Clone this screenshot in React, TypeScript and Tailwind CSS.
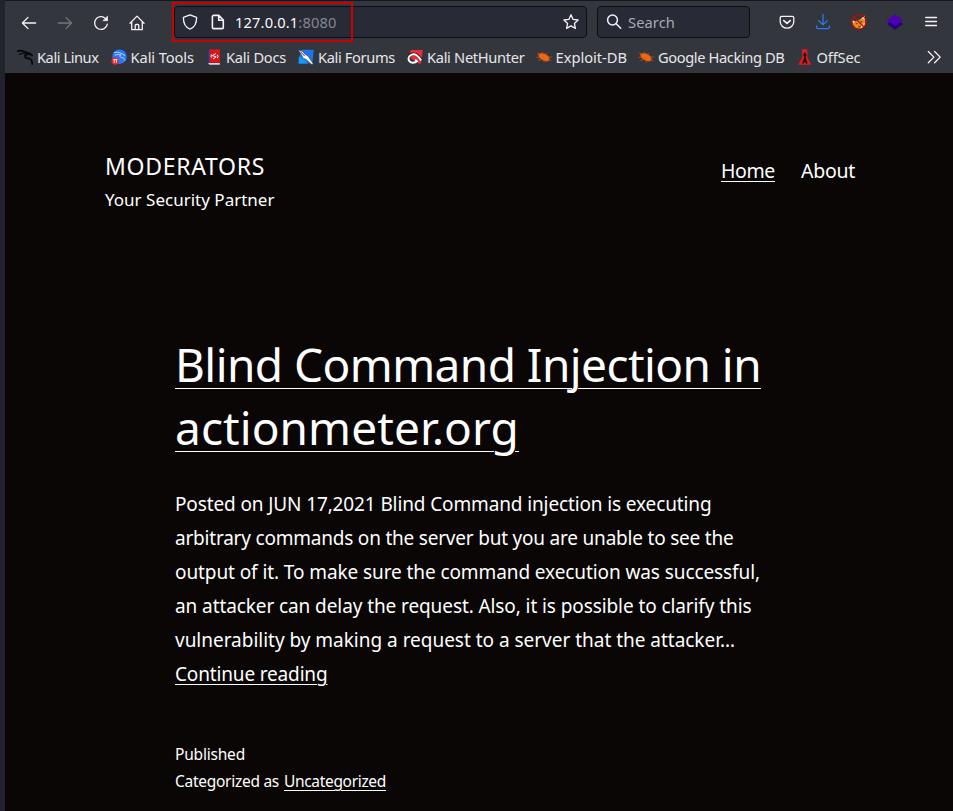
import { useLayoutEffect, useRef, useState } from 'react';
import type { ReactNode } from 'react';

/* Text run whose tracking is computed so that it fills the given width. */
function Fit({ w, children, className = '' }: { w: number; children: ReactNode; className?: string }) {
  const ref = useRef<HTMLSpanElement>(null);
  const [spacing, setSpacing] = useState(0);
  useLayoutEffect(() => {
    const el = ref.current;
    if (!el) return;
    const natural = el.getBoundingClientRect().width;
    const n = (el.textContent ?? '').length;
    setSpacing((w - natural) / n);
  }, [w]);
  return (
    <span ref={ref} className={`inline-block whitespace-nowrap ${className}`} style={{ letterSpacing: `${spacing}px` }}>
      {children}
    </span>
  );
}

const line = { fill: 'none', stroke: '#f4f4f6', strokeWidth: 1.3, strokeLinecap: 'round', strokeLinejoin: 'round' } as const;

const Dragon = ({ color }: { color: string }) => (
  <g fill="none" stroke={color} strokeLinecap="round" strokeLinejoin="round">
    <path d="M.8 2 5 1.7 9.4 3.6" strokeWidth="1.8" />
    <path d="M2.6 5.4 6.5 4 10 5" strokeWidth="1.3" />
    <path d="M9.2 3.6 13 4.6 15 6.6M13 5 10.5 5.2C8 5.4 7.4 7.4 8.6 8.5 10 9.6 12.6 8.9 14 10.6 15 11.8 15 13.2 15.3 15" strokeWidth="1.9" />
  </g>
);

const Bug = () => (
  <g fill="#f26511" stroke="#c9540f" strokeWidth=".4">
    <path d="M2.4 5.2 5 4.3l3.6.4 3.4 2.1 1.6 2.6-1.4 2.8-3.2-.2-4.4-2.3L3 8Z" />
    <path d="M1 3.8 4 5.4M.6 8.4l3 .2M2.4 11.4l3-1M12 8.2l3.8-.2M12.5 10.4l2.6 1.6M5.4 4.6 7 3M9.6 5.4l1.4-1.2M7 11l1.6 2.4" fill="none" strokeWidth=".8" />
  </g>
);

const bookmarks: { label: string; w: number; gap: string; icon: ReactNode }[] = [
  { label: 'Kali Linux', w: 61.5, gap: 'mr-[12px]', icon: <Dragon color="#08090b" /> },
  {
    label: 'Kali Tools', w: 63.5, gap: 'mr-[12px]',
    icon: (
      <g>
        <circle cx="8.5" cy="7.7" r="7.2" fill="#2777ff" />
        <path d="M3 3.8C6 2.6 8.5 3.5 10.5 4.5L14 6.6M3.8 6.5C6.5 4.8 8.4 5.4 9.8 6.2M10 5.3C7.6 7 9 8.3 11 8.5c1.8.4 2.6 1.6 2.8 3" fill="none" stroke="#c9dfff" strokeWidth=".9" />
        <circle cx="4.2" cy="12" r="3.7" fill="#ed2530" />
        <path d="M2.2 10.6h4.3M3.3 10.6v3.2M5.4 10.6v3.2" stroke="#fff" strokeWidth=".9" />
      </g>
    ),
  },
  {
    label: 'Kali Docs', w: 60, gap: 'mr-[12px]',
    icon: (
      <g>
        <path d="M1.8 1 3.8.3v15L1.8 14.6Z" fill="#183f9a" />
        <path d="M3.5.3H14v13.4H3.5Z" fill="#dd1519" />
        <path d="M2.2 14h11.6v1.7H3.2Z" fill="#d8d3d3" />
        <path d="M9.8 4.6 6.4 6.6l3.8 1.2L7 10M5.6 5.4 4.9 7.2l1 1.4M11.2 5.8l.9 1.5-.8 1.8" fill="none" stroke="#fff" strokeWidth="1" />
      </g>
    ),
  },
  {
    label: 'Kali Forums', w: 77, gap: 'mr-[12px]',
    icon: (
      <g>
        <path d="M2.8.8H15.8L14.4 14.5H.6Z" fill="#1e74ee" />
        <path d="M.8 7.5 6 10l3 4.5H.6Z" fill="#1499f5" />
        <path d="M0 .8 4.7 2.4l2 2.6L10 7l5.4 8-1.6.4L8 10.4 5 9.2 3.6 6Z" fill="#fff" stroke="#29303b" strokeWidth=".6" />
        <path d="m2.4 2.6 4.4 4.6" stroke="#303745" strokeWidth="1" />
      </g>
    ),
  },
  {
    label: 'Kali NetHunter', w: 97.5, gap: 'mr-[11px]',
    icon: (
      <g>
        <path d="M3.6 1H15.7L14.2 14.5H.8Z" fill="#ee2a39" />
        <path d="M1.4 8.4C2.2 5.4 6.4 4 9.4 5.8c2.2 1.4 4 3.6 5.7 5.8" fill="none" stroke="#202329" strokeWidth="3" />
        <path d="M0 8h3l3 3h5v4H0Z" fill="#34363e" />
        <path d="M1.6 8.6C2.5 5.6 6.7 4.5 9.2 6c2 1.4 3.6 3.4 5 5.6M1.6 8.6c-.6 3 1.4 5.2 4.6 5.1 1.6 0 2.8-.5 3.8-1.4L8.2 10.6" fill="none" stroke="#fff" strokeWidth="1.9" />
      </g>
    ),
  },
  { label: 'Exploit-DB', w: 71.5, gap: 'mr-[11px]', icon: <Bug /> },
  { label: 'Google Hacking DB', w: 126.5, gap: 'mr-[12px]', icon: <Bug /> },
  {
    label: 'OffSec', w: 44, gap: 'mr-0',
    icon: (
      <g>
        <path d="M5.1.2h5.2l.1 8.2 4 7.3H1.2l4-7.3Z" fill="#df1b21" />
        <path d="M7 3.4h1.7v2h1v1.4H9V10l1.8 4.4H8.6l-.8-2.2-1 2.2H4.9L6.9 9.8V6.8H6V5.4h1Z" fill="#35090c" />
      </g>
    ),
  },
];

const paragraph: [string, number][] = [
  ['Posted on JUN 17,2021 Blind Command injection is executing', 536.5],
  ['arbitrary commands on the server but you are unable to see the', 558.5],
  ['output of it. To make sure the command execution was successful,', 585],
  ['an attacker can delay the request. Also, it is possible to clarify this', 576.5],
  ['vulnerability by making a request to a server that the attacker…', 560],
];

function Toolbar() {
  return (
    <nav className="flex h-[42px] shrink-0 items-center">
      <div className="flex w-[169px] items-center gap-[20px] pt-px pl-4">
        <svg className="size-4" viewBox="0 0 16 16" {...line}><path d="M14.7 8H1.6M7 2.4 1.4 8 7 13.6" /></svg>
        <svg className="size-4" viewBox="0 0 16 16" {...line} stroke="#75767c"><path d="M1.3 8h13.1M9 2.4 14.6 8 9 13.6" /></svg>
        <svg className="size-4" viewBox="0 0 16 16" {...line}><path d="M14.3 9.1A6.4 6.4 0 1 1 12.4 3.4L14 5" /><path d="M14.5 1.5v4.2h-4.3Z" fill="#f4f4f6" strokeWidth=".7" /></svg>
        <svg className="size-4" viewBox="0 0 16 16" {...line}><path d="M1 8.2 8 1.1l7 7.1M2.7 6.8v7.8h10.6V6.8M6.2 14.4v-3.9a1 1 0 0 1 1-1h1.6a1 1 0 0 1 1 1v3.9" /></svg>
      </div>
      <div className="relative flex h-8 w-[413px] items-center rounded-[4px] border border-[#0d0e13] bg-[#282a36] pl-[7px]">
        <svg className="size-4" viewBox="0 0 16 16" {...line}><path d="M8 .9 14.6 3.3C14.7 9 12.5 13.5 8 15.1 3.5 13.5 1.3 9 1.4 3.3Z" /></svg>
        <svg className="ml-[12px] size-4" viewBox="0 0 16 16" {...line} strokeWidth="1.6"><path d="M2.4 2.6a1.2 1.2 0 0 1 1.2-1.2h5.2l4.5 4.6v7.4a1.2 1.2 0 0 1-1.2 1.2H3.6a1.2 1.2 0 0 1-1.2-1.2ZM8.7 1.6v4.6h4.5" /></svg>
        <span className="ml-[9px] text-[14.67px] leading-5 text-[#85868f]"><Fit w={101.5}><span className="text-[#f8f8f9]">127.0.0.1</span>:8080</Fit></span>
        <svg className="mr-[7px] ml-auto size-4" viewBox="0 0 16 16" {...line}><path d="m8 .8 2.1 4.6 5 .6-3.7 3.4 1 5L8 11.9l-4.4 2.5 1-5L.9 6l5-.6Z" /></svg>
        <div className="pointer-events-none absolute -top-[5px] -left-[3px] h-10 w-[181px] border-2 border-[#cc0000]" />
      </div>
      <div className="ml-[10px] flex h-8 w-[153px] items-center rounded-[4px] border border-[#0d0e13] bg-[#282a36] pl-[8px] text-[14.67px] text-[#a9abb4]">
        <svg className="mr-[6px] size-4" viewBox="0 0 16 16" {...line} strokeWidth="1.5"><circle cx="6.5" cy="6" r="4.9" /><path d="m10.2 9.8 4.5 4.5" /></svg>
        <Fit w={47}>Search</Fit>
      </div>
      <div className="flex items-center gap-[20px] pl-[29px]">
        <svg className="size-4" viewBox="0 0 16 16" {...line}><path d="M2.7 2.3h10.6c.9 0 1.5.6 1.5 1.5v3.6a6.8 6.8 0 0 1-13.6 0V3.8c0-.9.6-1.5 1.5-1.5Z" /><path d="m4.8 6.6 3.2 2.8 3.2-2.8" strokeWidth="1.6" /></svg>
        <svg className="size-4" viewBox="0 0 16 16" {...line} stroke="#2b78ed"><path d="M8 .4v10.3M3.8 6.7 8 10.9l4.2-4.2M1.6 11.8v1.5c0 .8.6 1.4 1.4 1.4h10c.8 0 1.4-.6 1.4-1.4v-1.5" /></svg>
        <svg className="size-4" viewBox="0 0 16 16">
          <path d="m1.2 6.4 3 1.2L9.6 5l4-3.6.8 4.8-.6 5-4.3 3.7-5-1.2L2.2 11Z" fill="#ee8a1c" />
          <path d="m1 6.2 3 1-1.8 2.4Zm9.4-1.6L13.6 1.8l.6 4Zm-.6 6.6 4.4-2.4-1.8 4.2-2.6 1.2Z" fill="#f5d8ae" />
          <path d="m4.8 10 1.8-.8M9.4 8.2l1.8-.9M7.2 12.6l1.6.2.8-1" fill="none" stroke="#7a3b10" strokeWidth="1.1" />
          <circle cx="8" cy="8" r="7.2" fill="none" stroke="#b80d0d" strokeWidth="1.2" /><path d="m3 3 10 10" stroke="#b80d0d" strokeWidth="1.2" />
        </svg>
        <svg className="size-4" viewBox="0 0 16 16"><path d="M0 10 8 4.5l8 5.5-8 5.8Z" fill="#22007c" /><path d="m0 6.3 8-6 8 6-8 5.8Z" fill="#4d00b4" /></svg>
        <svg className="size-4" viewBox="0 0 16 16" {...line}><path d="M2.7 3.5h10.8M2.7 7.5h10.8M2.7 11.5h10.8" /></svg>
      </div>
    </nav>
  );
}

export default function App() {
  return (
    <div className="flex h-[811px] w-[953px] flex-col overflow-hidden bg-[#21232d] pl-[5px] font-['Noto_Sans',sans-serif] text-white">
      <div className="flex h-[73px] shrink-0 flex-col border-t border-[#15171e] bg-[#34363e]">
        <Toolbar />
        <div className="flex h-[28px] items-center pl-[12px] text-[14.67px] leading-5 text-[#e6e6e8]">
          {bookmarks.map((b) => (
            <div key={b.label} className={`flex shrink-0 items-center ${b.gap}`}>
              <svg className="mr-[4px] size-4" viewBox="0 0 16 16">{b.icon}</svg>
              <Fit w={b.w}>{b.label}</Fit>
            </div>
          ))}
          <svg className="mr-[11px] ml-auto size-4" viewBox="0 0 16 16" {...line}><path d="m2.3 2.5 5.6 5.6-5.6 5.6M8.6 2.5l5.6 5.6-5.6 5.6" /></svg>
        </div>
      </div>
      <div className="flex grow flex-col bg-[#0a0605]">
        <header className="flex h-[260px] shrink-0 justify-between pt-[77px] pr-[98px] pl-[100px]">
          <div className="flex flex-col">
            <h1 className="h-[38px] text-[23px] leading-8"><Fit w={160}>MODERATORS</Fit></h1>
            <p className="text-[17px] leading-6"><Fit w={169.5}>Your Security Partner</Fit></p>
          </div>
          <div className="flex gap-[26px] pt-[7px] text-[19.5px] leading-7">
            <Fit w={54} className="underline decoration-1 underline-offset-[3px]">Home</Fit>
            <Fit w={54}>About</Fit>
          </div>
        </header>
        <main className="flex flex-col pl-[170px]">
          <h2 className="flex flex-col items-start text-[46px] leading-[63px]">
            <Fit w={586} className="underline decoration-1 underline-offset-[6px]">Blind Command Injection in</Fit>
            <Fit w={344} className="underline decoration-1 underline-offset-[6px]">actionmeter.org</Fit>
          </h2>
          <div className="mt-[28px] flex flex-col items-start text-[19px] leading-[34px]">
            {paragraph.map(([text, w]) => <Fit key={text} w={w}>{text}</Fit>)}
            <Fit w={152.5} className="underline decoration-1 underline-offset-[3px]">Continue reading</Fit>
          </div>
          <footer className="mt-[50px] flex flex-col items-start text-[15.5px] leading-[27px]">
            <Fit w={70}>Published</Fit>
            <div className="flex">
              <Fit w={104} className="mr-[5px]">Categorized as</Fit>
              <Fit w={102} className="underline decoration-1 underline-offset-[3px]">Uncategorized</Fit>
            </div>
          </footer>
        </main>
      </div>
    </div>
  );
}
